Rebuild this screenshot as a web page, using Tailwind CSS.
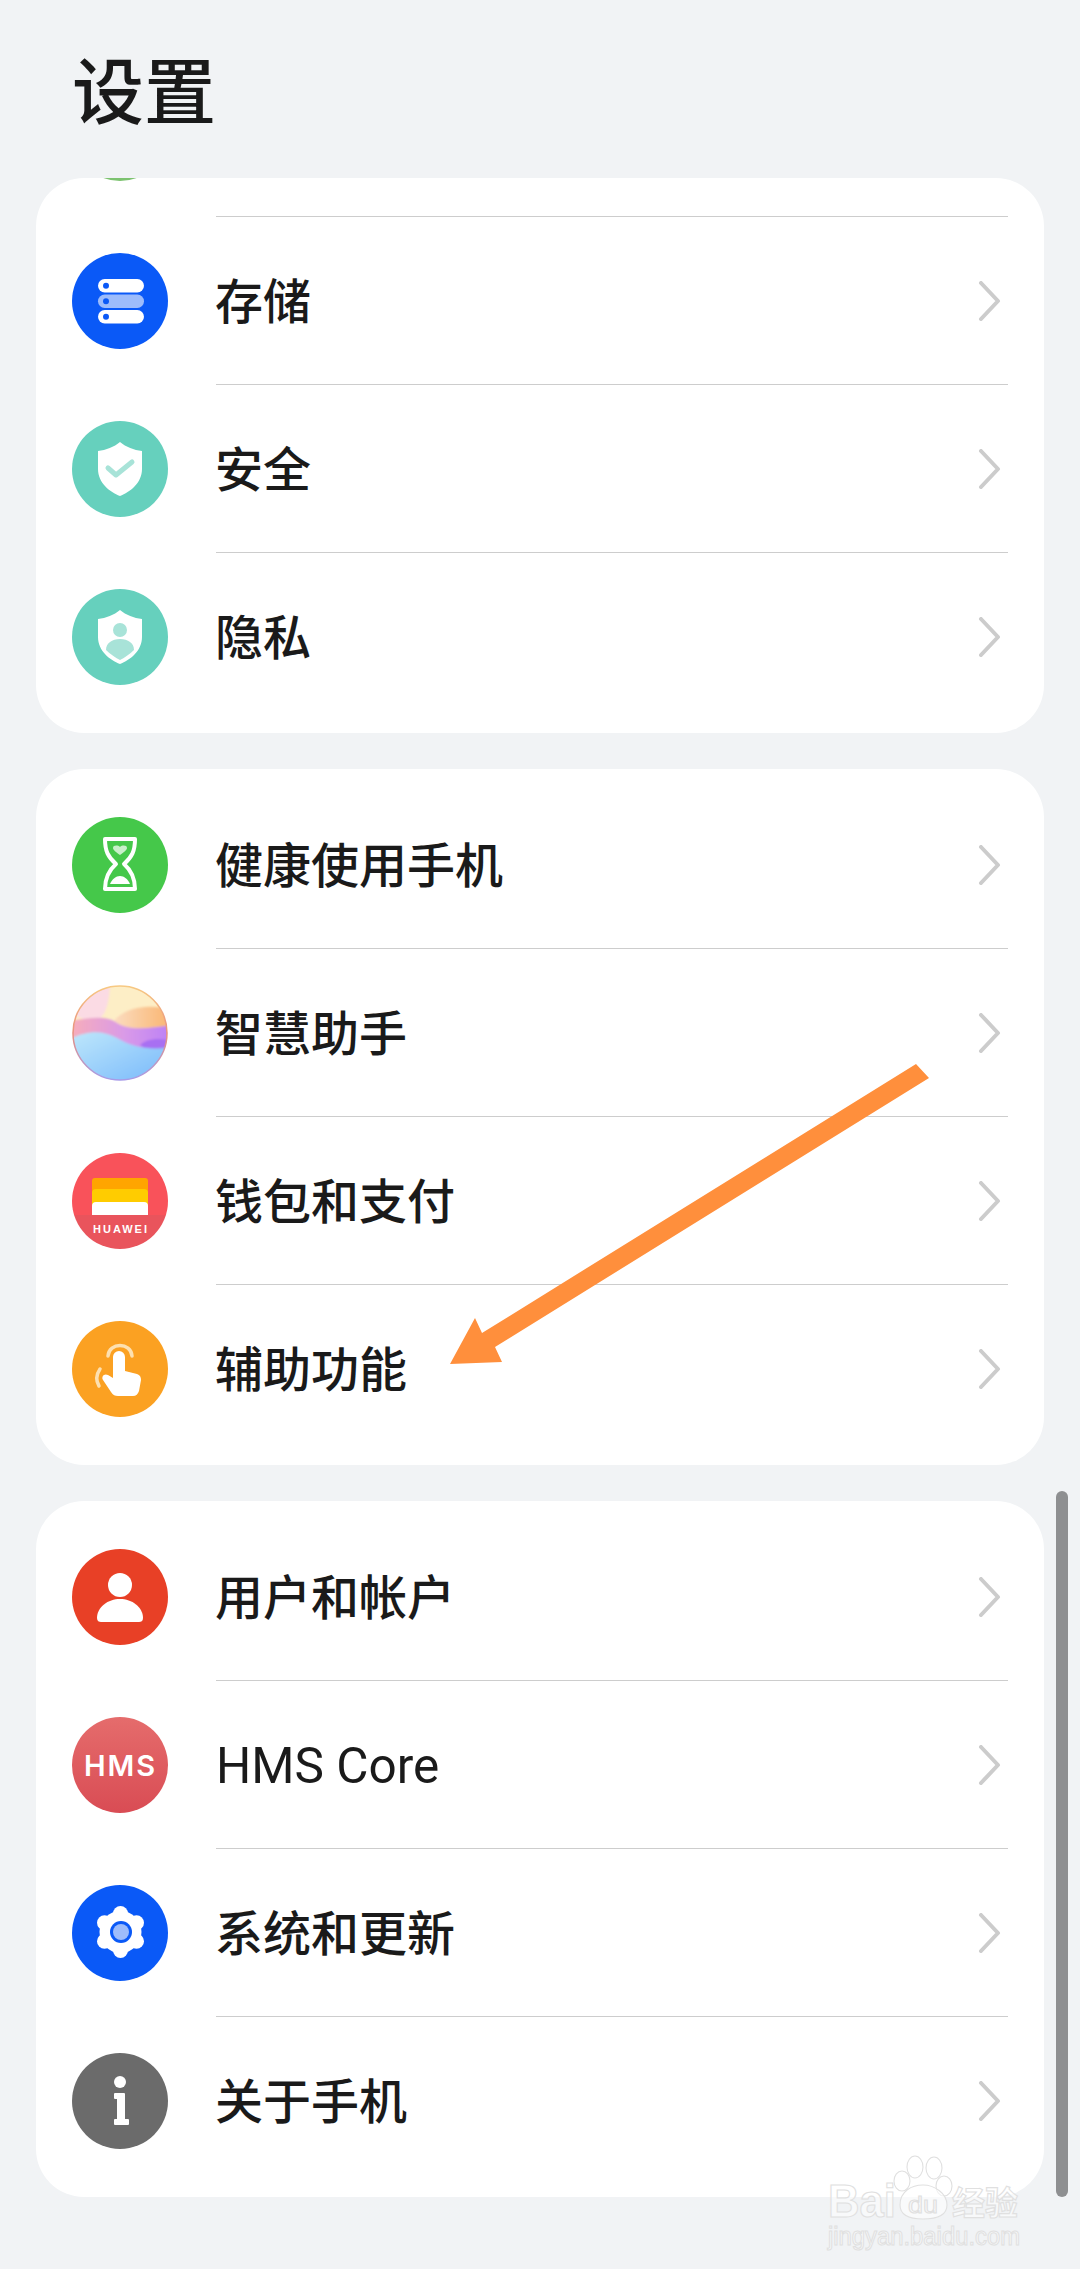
<!DOCTYPE html>
<html lang="zh-CN">
<head>
  <meta charset="UTF-8">
  <meta name="viewport" content="width=device-width, initial-scale=1.0">
  <title>设置</title>
  <script src="https://cdn.jsdelivr.net/npm/@tailwindcss/browser@4"></script>
</head>
<body class="bg-[#f1f3f5] font-['Noto_Sans_CJK_SC','Noto_Sans',sans-serif] text-[#1a1a1a]">
  <div class="relative h-[2269px] w-[1080px] overflow-hidden">
    <header class="flex h-[178px] items-start pl-[72px] pt-[35px]">
      <h1 class="text-[72px] leading-[104px] font-medium">设置</h1>
    </header>

    <main class="flex flex-col gap-9 px-9">
      <!-- first card, scrolled so only the tail of the top row shows -->
      <section class="overflow-hidden rounded-[48px] bg-white pb-3">
        <div class="-mt-[129px] flex h-[168px] items-center pl-9 pr-9">
          <div class="h-24 w-24 shrink-0 rounded-full bg-[#7cc26f]"></div>
          <div class="ml-12 h-full flex-1 border-b border-[#cdcdcd]"></div>
        </div>
        <div class="flex h-[168px] items-center pl-9 pr-9">
          <svg class="h-24 w-24 shrink-0" viewBox="0 0 96 96"><circle cx="48" cy="48" r="48" fill="#0a59f7"/><rect x="26" y="26" width="46" height="13.5" rx="6.7" fill="#fff"/><rect x="26" y="41.5" width="46" height="13.5" rx="6.7" fill="#9dbcfb"/><rect x="26" y="57" width="46" height="13.5" rx="6.7" fill="#fff"/><circle cx="34" cy="32.7" r="3" fill="#0a59f7"/><circle cx="34" cy="48.2" r="3" fill="#0a59f7"/><circle cx="34" cy="63.7" r="3" fill="#0a59f7"/></svg>
          <div class="ml-12 flex h-full flex-1 items-center justify-between border-b border-[#cdcdcd] pr-[6px]">
            <span class="-ml-px mb-[6px] text-[48px] font-medium">存储</span>
            <svg class="h-10 w-6" viewBox="0 0 24 40"><path d="M3 2 L20 20 L3 38" fill="none" stroke="#cccccc" stroke-width="4" stroke-linecap="round" stroke-linejoin="round"/></svg>
          </div>
        </div>
        <div class="flex h-[168px] items-center pl-9 pr-9">
          <svg class="h-24 w-24 shrink-0" viewBox="0 0 96 96"><circle cx="48" cy="48" r="48" fill="#66d0bd"/><path d="M48 21 C54 26 62 29 70 30 V48 C70 62 58 71 48 75 C38 71 26 62 26 48 V30 C34 29 42 26 48 21Z" fill="#fff"/><path d="M36 47 L44 54 L60 41" fill="none" stroke="#a8e3d8" stroke-width="5" stroke-linecap="round" stroke-linejoin="round"/></svg>
          <div class="ml-12 flex h-full flex-1 items-center justify-between border-b border-[#cdcdcd] pr-[6px]">
            <span class="-ml-px mb-[6px] text-[48px] font-medium">安全</span>
            <svg class="h-10 w-6" viewBox="0 0 24 40"><path d="M3 2 L20 20 L3 38" fill="none" stroke="#cccccc" stroke-width="4" stroke-linecap="round" stroke-linejoin="round"/></svg>
          </div>
        </div>
        <div class="flex h-[168px] items-center pl-9 pr-9">
          <svg class="h-24 w-24 shrink-0" viewBox="0 0 96 96"><circle cx="48" cy="48" r="48" fill="#66d0bd"/><path d="M48 21 C54 26 62 29 70 30 V48 C70 62 58 71 48 75 C38 71 26 62 26 48 V30 C34 29 42 26 48 21Z" fill="#fff"/><circle cx="48" cy="41" r="7" fill="#a8e3d8"/><path d="M34 61 C34 54 40 50 48 50 C56 50 62 54 62 61 C58 65 52 69 48 71 C44 69 38 65 34 61Z" fill="#a8e3d8"/></svg>
          <div class="ml-12 flex h-full flex-1 items-center justify-between pr-[6px]">
            <span class="-ml-px mb-[6px] text-[48px] font-medium">隐私</span>
            <svg class="h-10 w-6" viewBox="0 0 24 40"><path d="M3 2 L20 20 L3 38" fill="none" stroke="#cccccc" stroke-width="4" stroke-linecap="round" stroke-linejoin="round"/></svg>
          </div>
        </div>
      </section>

      <section class="rounded-[48px] bg-white py-3">
        <div class="flex h-[168px] items-center pl-9 pr-9">
          <svg class="h-24 w-24 shrink-0" viewBox="0 0 96 96"><circle cx="48" cy="48" r="48" fill="#45c84a"/><path d="M33 22 H63 C63 34 60 40 52 47 C60 54 63 62 63 72 H33 C33 62 36 54 44 47 C36 40 33 34 33 22Z" fill="none" stroke="#fff" stroke-width="4" stroke-linejoin="round"/><path d="M48 38 C44 35 41 33 41 31 C41 28 46 28 48 30 C50 28 55 28 55 31 C55 33 52 35 48 38Z" fill="#c9efca"/><path d="M38 67 C40 62 44 59 48 59 C52 59 56 62 58 67Z" fill="#fff"/></svg>
          <div class="ml-12 flex h-full flex-1 items-center justify-between border-b border-[#cdcdcd] pr-[6px]">
            <span class="-ml-px mb-[6px] text-[48px] font-medium">健康使用手机</span>
            <svg class="h-10 w-6" viewBox="0 0 24 40"><path d="M3 2 L20 20 L3 38" fill="none" stroke="#cccccc" stroke-width="4" stroke-linecap="round" stroke-linejoin="round"/></svg>
          </div>
        </div>
        <div class="flex h-[168px] items-center pl-9 pr-9">
          <svg class="h-24 w-24 shrink-0" viewBox="0 0 96 96">
            <defs>
              <clipPath id="orb"><circle cx="48" cy="48" r="47"/></clipPath>
              <filter id="soft" x="-10%" y="-10%" width="120%" height="120%"><feGaussianBlur stdDeviation="1"/></filter>
              <linearGradient id="orbRim" x1="0" y1="0" x2="0" y2="1"><stop offset="0" stop-color="#f7c982"/><stop offset=".5" stop-color="#e8907f"/><stop offset="1" stop-color="#a79be8"/></linearGradient>
              <linearGradient id="orbOrange" x1="0" y1="0" x2="1" y2="0"><stop offset="0" stop-color="#fbdcc0"/><stop offset="1" stop-color="#f9b46e"/></linearGradient>
              <linearGradient id="orbBand" x1="0" y1="0" x2="1" y2="0"><stop offset="0" stop-color="#f9aeb8"/><stop offset=".55" stop-color="#d99ae8"/><stop offset="1" stop-color="#bb80f7"/></linearGradient>
              <linearGradient id="orbBlue" x1="0" y1="0" x2="1" y2="1"><stop offset="0" stop-color="#bfe8fb"/><stop offset="1" stop-color="#74b6fb"/></linearGradient>
            </defs>
            <g clip-path="url(#orb)">
              <rect width="96" height="96" fill="#fdeec6"/>
              <g filter="url(#soft)">
                <path d="M-4 -4 H38 C38 15 34 35 22 36 C12 37 6 28 -4 32Z" fill="#fbdbe4"/>
                <path d="M42 36 C52 22 78 18 100 25 V50 C80 50 56 52 42 36Z" fill="url(#orbOrange)"/>
                <path d="M-4 36 C15 34 30 30 42 36 C55 46 75 44 100 40 V72 H-4Z" fill="url(#orbBand)"/>
                <path d="M68 60 C74 54 86 52 100 56 V66 C86 68 76 66 68 60Z" fill="#a86ff2"/>
                <path d="M-4 55 C15 45 30 45 45 53 C60 62 78 66 100 62 V100 H-4Z" fill="url(#orbBlue)"/>
              </g>
            </g>
            <circle cx="48" cy="48" r="47" fill="none" stroke="url(#orbRim)" stroke-width="1.5"/>
          </svg>
          <div class="ml-12 flex h-full flex-1 items-center justify-between border-b border-[#cdcdcd] pr-[6px]">
            <span class="-ml-px mb-[6px] text-[48px] font-medium">智慧助手</span>
            <svg class="h-10 w-6" viewBox="0 0 24 40"><path d="M3 2 L20 20 L3 38" fill="none" stroke="#cccccc" stroke-width="4" stroke-linecap="round" stroke-linejoin="round"/></svg>
          </div>
        </div>
        <div class="flex h-[168px] items-center pl-9 pr-9">
          <svg class="h-24 w-24 shrink-0" viewBox="0 0 96 96">
            <defs><clipPath id="wallet"><circle cx="48" cy="48" r="48"/></clipPath></defs>
            <g clip-path="url(#wallet)"><rect width="96" height="62" fill="#f9525a"/><rect y="62" width="96" height="34" fill="#e9545c"/></g>
            <path d="M20 62 V28 Q20 25 23 25 H73 Q76 25 76 28 V62Z" fill="#ffa500"/>
            <path d="M20 62 V40 Q20 36 24 36 H72 Q76 36 76 40 V62Z" fill="#ffcc00"/>
            <path d="M20 62 V53 Q20 49 24 49 H72 Q76 49 76 53 V62Z" fill="#fff"/>
            <text x="21" y="80" font-family="Liberation Sans" font-weight="700" font-size="11" textLength="54" lengthAdjust="spacing" fill="#fff">HUAWEI</text>
          </svg>
          <div class="ml-12 flex h-full flex-1 items-center justify-between border-b border-[#cdcdcd] pr-[6px]">
            <span class="-ml-px mb-[6px] text-[48px] font-medium">钱包和支付</span>
            <svg class="h-10 w-6" viewBox="0 0 24 40"><path d="M3 2 L20 20 L3 38" fill="none" stroke="#cccccc" stroke-width="4" stroke-linecap="round" stroke-linejoin="round"/></svg>
          </div>
        </div>
        <div class="flex h-[168px] items-center pl-9 pr-9">
          <svg class="h-24 w-24 shrink-0" viewBox="0 0 96 96"><circle cx="48" cy="48" r="48" fill="#fba122"/><path d="M36 35 C37 21 59 21 60 35" fill="none" stroke="#fde0b0" stroke-width="3.5" stroke-linecap="round"/><path d="M28 48 C24 54 24 60 27 65" fill="none" stroke="#fde0b0" stroke-width="3.5" stroke-linecap="round"/><path d="M41 36 a6 6 0 0 1 12 0 V50 L65 53 C68 54 69 56 69 59 L67 70 C66 73 64 75 61 75 H46 C43 75 41 74 39 71 L31 59 C29 56 32 52 36 54 L41 57Z" fill="#fff"/></svg>
          <div class="ml-12 flex h-full flex-1 items-center justify-between pr-[6px]">
            <span class="-ml-px mb-[6px] text-[48px] font-medium">辅助功能</span>
            <svg class="h-10 w-6" viewBox="0 0 24 40"><path d="M3 2 L20 20 L3 38" fill="none" stroke="#cccccc" stroke-width="4" stroke-linecap="round" stroke-linejoin="round"/></svg>
          </div>
        </div>
      </section>

      <section class="rounded-[48px] bg-white py-3">
        <div class="flex h-[168px] items-center pl-9 pr-9">
          <svg class="h-24 w-24 shrink-0" viewBox="0 0 96 96"><circle cx="48" cy="48" r="48" fill="#e84026"/><circle cx="48" cy="36" r="12" fill="#fff"/><path d="M25 69 C25 58 36 50 48 50 C60 50 71 58 71 69 C71 72 69 73 67 73 H29 C27 73 25 72 25 69Z" fill="#fff"/></svg>
          <div class="ml-12 flex h-full flex-1 items-center justify-between border-b border-[#cdcdcd] pr-[6px]">
            <span class="-ml-px mb-[6px] text-[48px] font-medium">用户和帐户</span>
            <svg class="h-10 w-6" viewBox="0 0 24 40"><path d="M3 2 L20 20 L3 38" fill="none" stroke="#cccccc" stroke-width="4" stroke-linecap="round" stroke-linejoin="round"/></svg>
          </div>
        </div>
        <div class="flex h-[168px] items-center pl-9 pr-9">
          <svg class="h-24 w-24 shrink-0" viewBox="0 0 96 96">
            <defs><linearGradient id="hms" x1="0" y1="0" x2="0" y2="1"><stop offset="0" stop-color="#e56c6c"/><stop offset="1" stop-color="#d94c54"/></linearGradient></defs>
            <circle cx="48" cy="48" r="48" fill="url(#hms)"/>
            <text x="12" y="58.5" font-family="Inter" font-weight="600" font-size="29" textLength="71" lengthAdjust="spacing" fill="#fff">HMS</text>
          </svg>
          <div class="ml-12 flex h-full flex-1 items-center justify-between border-b border-[#cdcdcd] pr-[6px]">
            <span class="mt-[3px] font-['Roboto','Noto_Sans',sans-serif] text-[49.5px]">HMS Core</span>
            <svg class="h-10 w-6" viewBox="0 0 24 40"><path d="M3 2 L20 20 L3 38" fill="none" stroke="#cccccc" stroke-width="4" stroke-linecap="round" stroke-linejoin="round"/></svg>
          </div>
        </div>
        <div class="flex h-[168px] items-center pl-9 pr-9">
          <svg class="h-24 w-24 shrink-0" viewBox="0 0 96 96"><circle cx="48" cy="48" r="48" fill="#0a59f7"/><g fill="#fff"><circle cx="48.5" cy="47" r="21"/><circle cx="48.5" cy="28.5" r="7.5"/><circle cx="48.5" cy="65.5" r="7.5"/><circle cx="32.5" cy="37.7" r="7.5"/><circle cx="64.5" cy="37.7" r="7.5"/><circle cx="32.5" cy="56.3" r="7.5"/><circle cx="64.5" cy="56.3" r="7.5"/></g><circle cx="49" cy="47" r="11" fill="#0a59f7"/><circle cx="49" cy="47" r="8" fill="#9dbcfb"/></svg>
          <div class="ml-12 flex h-full flex-1 items-center justify-between border-b border-[#cdcdcd] pr-[6px]">
            <span class="-ml-px mb-[6px] text-[48px] font-medium">系统和更新</span>
            <svg class="h-10 w-6" viewBox="0 0 24 40"><path d="M3 2 L20 20 L3 38" fill="none" stroke="#cccccc" stroke-width="4" stroke-linecap="round" stroke-linejoin="round"/></svg>
          </div>
        </div>
        <div class="flex h-[168px] items-center pl-9 pr-9">
          <svg class="h-24 w-24 shrink-0" viewBox="0 0 96 96"><circle cx="48" cy="48" r="48" fill="#6b6b6b"/><circle cx="48" cy="29" r="6" fill="#fff"/><path d="M43 41 H52 V67 H56 V71 H43 V67 H46 V45 H43Z" fill="#fff" stroke="#fff" stroke-width="2" stroke-linejoin="round"/></svg>
          <div class="ml-12 flex h-full flex-1 items-center justify-between pr-[6px]">
            <span class="-ml-px mb-[6px] text-[48px] font-medium">关于手机</span>
            <svg class="h-10 w-6" viewBox="0 0 24 40"><path d="M3 2 L20 20 L3 38" fill="none" stroke="#cccccc" stroke-width="4" stroke-linecap="round" stroke-linejoin="round"/></svg>
          </div>
        </div>
      </section>
    </main>

    <!-- scrollbar -->
    <div class="absolute left-[1056px] top-[1491px] h-[706px] w-3 rounded-full bg-[#8e8f91]"></div>

    <!-- annotation arrow -->
    <svg class="pointer-events-none absolute left-0 top-0" width="1080" height="2269" viewBox="0 0 1080 2269">
      <polygon points="916,1064 929,1078 495,1347 502,1362 450,1364 475,1318 482,1333" fill="#ff8f3c"/>
    </svg>

    <!-- watermark -->
    <svg class="pointer-events-none absolute left-[820px] top-[2147px]" width="210" height="116" viewBox="0 0 210 116">
      <g fill="#ffffff" fill-opacity=".55" stroke="#e0e0e0" stroke-width="1.1">
        <text x="8" y="70" font-family="Liberation Sans" font-weight="700" font-size="46" textLength="68" lengthAdjust="spacingAndGlyphs">Bai</text>
        <ellipse cx="95" cy="20" rx="8" ry="11"/>
        <ellipse cx="114" cy="21" rx="8" ry="11"/>
        <ellipse cx="82" cy="34" rx="8" ry="10"/>
        <ellipse cx="124" cy="39" rx="8" ry="10"/>
        <path d="M80 58 C80 44 92 38 103 38 C114 38 127 46 127 58 C127 68 118 72 103 72 C88 72 80 68 80 58Z"/>
        <text x="88" y="66" font-family="Liberation Sans" font-size="24" textLength="30" lengthAdjust="spacingAndGlyphs">du</text>
        <text x="132" y="68" font-family="Noto Sans CJK SC" font-weight="700" font-size="33">经验</text>
        <text x="8" y="98" font-family="Liberation Sans" font-size="25.5" textLength="192" lengthAdjust="spacingAndGlyphs">jingyan.baidu.com</text>
      </g>
    </svg>
  </div>
</body>
</html>
